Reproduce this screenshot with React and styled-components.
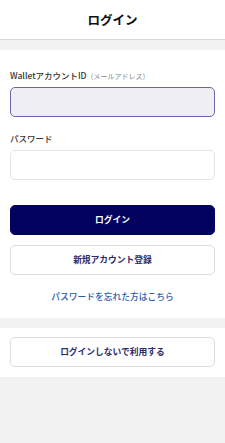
import React from "react";
import styled, { createGlobalStyle } from "styled-components";

const Global = createGlobalStyle`
  html, body { margin: 0; padding: 0; background: #f2f2f2; }
  body { font-family: "Noto Sans CJK JP", "Noto Sans", sans-serif; }
  * { box-sizing: border-box; }
`;

const Page = styled.div`
  width: 225px;
  min-height: 443px;
  background: #f2f2f2;
  display: flex;
  flex-direction: column;
`;

const Header = styled.header`
  height: 40px;
  flex: none;
  background: #fff;
  border-bottom: 1px solid #d6d6d6;
  display: flex;
  align-items: center;
  justify-content: center;
  font-size: 12.5px;
  font-weight: 700;
  color: #111;
`;

const Section = styled.section`
  flex: none;
  background: #fff;
  margin-top: ${(p) => p.$mt}px;
  padding: ${(p) => p.$pad};
  display: flex;
  flex-direction: column;
`;

const Label = styled.div`
  height: 13px;
  font-size: 8.5px;
  font-weight: 500;
  line-height: 13px;
  color: #333;
  margin-bottom: 5px;
  margin-top: ${(p) => p.$mt || 0}px;
  white-space: nowrap;
`;

const Sub = styled.span`
  font-size: 7px;
  font-weight: 400;
  color: #888;
`;

const Input = styled.div`
  flex: none;
  height: 30px;
  border-radius: 5px;
  border: 1px solid ${(p) => (p.$focus ? "#6b67a8" : "#e4e4e4")};
  background: ${(p) => (p.$focus ? "#efeef5" : "#fff")};
`;

const Button = styled.button`
  flex: none;
  height: 30px;
  border-radius: 5px;
  font-family: inherit;
  font-size: 8.75px;
  line-height: 1;
  font-weight: 700;
  margin: ${(p) => p.$mt || 0}px 0 0;
  border: 1px solid ${(p) => (p.$primary ? "#03035f" : "#dcdcdc")};
  background: ${(p) => (p.$primary ? "#03035f" : "#fff")};
  color: ${(p) => (p.$primary ? "#fff" : "#2c2c6a")};
  padding: 0;
`;

const Link = styled.div`
  height: 13px;
  text-align: center;
  font-size: 8.75px;
  font-weight: 500;
  line-height: 13px;
  color: #2a5cae;
  margin-top: 15px;
`;

export default function App() {
  return (
    <>
      <Global />
      <Page>
        <Header>ログイン</Header>
        <Section $mt={10} $pad="19px 10px 15px">
          <Label>
            WalletアカウントID<Sub>（メールアドレス）</Sub>
          </Label>
          <Input $focus />
          <Label $mt={15}>パスワード</Label>
          <Input />
          <Button $primary $mt={25}>ログイン</Button>
          <Button $mt={10}>新規アカウント登録</Button>
          <Link>パスワードを忘れた方はこちら</Link>
        </Section>
        <Section $mt={10} $pad="9px 10px 10px">
          <Button>ログインしないで利用する</Button>
        </Section>
      </Page>
    </>
  );
}
